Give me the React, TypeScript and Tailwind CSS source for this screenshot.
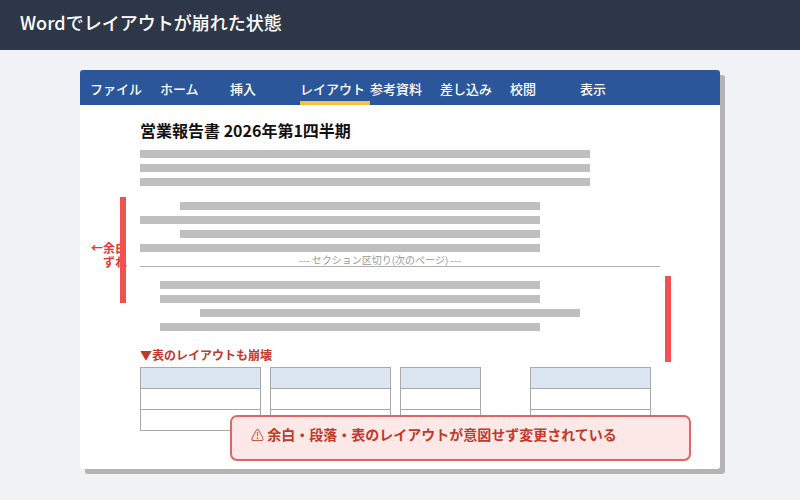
const tabs = ["ファイル", "ホーム", "挿入", "レイアウト", "参考資料", "差し込み", "校閲", "表示"];

const Line = ({ className }: { className: string }) => (
  <div className={`h-[8px] bg-[#bfbfbf] ${className}`}></div>
);

const Table = ({ width }: { width: string }) => (
  <div className={`flex flex-col border border-[#a9a9a9] ${width}`}>
    <div className="h-[21px] bg-[#dce6f2] border-b border-[#a9a9a9]"></div>
    <div className="h-[21px] bg-white border-b border-[#a9a9a9]"></div>
    <div className="h-[20px] bg-white"></div>
  </div>
);

export default function App() {
  return (
    <div
      className="w-[800px] h-[500px] bg-[#f0f2f5] flex flex-col"
      style={{ fontFamily: '"Noto Sans CJK JP", "Noto Sans", sans-serif' }}
    >
      <div className="h-[50px] bg-[#2d3748] px-5 pt-[10px]">
        <h1 className="text-[18px] leading-[24px] font-medium text-white">Wordでレイアウトが崩れた状態</h1>
      </div>

      <div className="pl-[80px] pt-[20px]">
        <div className="relative w-[640px] h-[399px] bg-white rounded-[3px] shadow-[5px_5px_0_#b4b4b4] flex flex-col">
          {/* ribbon */}
          <div className="h-[35px] bg-[#2b579a] rounded-t-[3px] flex pl-[10px]">
            {tabs.map((t) => (
              <div key={t} className="w-[70px] h-full flex flex-col">
                <div className="flex-1 pt-[10px] text-[13px] leading-[18px] font-medium text-white whitespace-nowrap">{t}</div>
                <div className={`h-[4px] ${t === "レイアウト" ? "bg-[#f4c142]" : ""}`}></div>
              </div>
            ))}
          </div>

          {/* page */}
          <div className="pl-[60px] pt-[14px] flex flex-col">
            <h2 className="text-[16px] leading-[22px] font-bold text-[#111]">営業報告書 2026年第1四半期</h2>

            <div className="mt-[9px] flex flex-col gap-[6px]">
              <Line className="w-[450px]" />
              <Line className="w-[450px]" />
              <Line className="w-[450px]" />
            </div>

            <div className="mt-[16px] flex flex-col gap-[6px]">
              <Line className="ml-[40px] w-[360px]" />
              <Line className="w-[400px]" />
              <Line className="ml-[40px] w-[360px]" />
              <Line className="w-[400px]" />
            </div>

            <div className="w-[520px] border-b border-[#b0b0b0] mt-[1px]">
              <div className="w-[480px] text-center text-[10px] leading-[13px] text-[#9a9a9a]">
                --- セクション区切り(次のページ) ---
              </div>
            </div>

            <div className="mt-[14px] flex flex-col gap-[6px]">
              <Line className="ml-[20px] w-[380px]" />
              <Line className="ml-[20px] w-[380px]" />
              <Line className="ml-[60px] w-[380px]" />
              <Line className="ml-[20px] w-[380px]" />
            </div>

            <div className="mt-[16px] text-[12px] leading-[16px] font-bold text-[#c0392b]">▼表のレイアウトも崩壊</div>

            <div className="mt-[4px] flex">
              <Table width="w-[121px]" />
              <div className="w-[9px]"></div>
              <Table width="w-[121px]" />
              <div className="w-[9px]"></div>
              <Table width="w-[81px]" />
              <div className="w-[49px]"></div>
              <Table width="w-[121px]" />
            </div>
          </div>

          {/* annotations */}
          <div className="absolute left-0 top-[171px] w-[47px] text-right text-[12px] leading-[14px] font-bold text-[#e53935]">
            <div>←余白</div>
            <div>ずれ</div>
          </div>
          <div className="absolute left-[40px] top-[127px] w-[6px] h-[106px] bg-[#f05252]"></div>
          <div className="absolute left-[585px] top-[206px] w-[6px] h-[86px] bg-[#f05252]"></div>

          <div className="absolute left-[150px] top-[345px] w-[461px] h-[46px] rounded-[7px] border-2 border-[#e06666] bg-[#fde8e8] pl-[19px] pt-[7px]">
            <div className="text-[14px] leading-[20px] font-bold text-[#c0392b]">
              <span className="font-normal text-[13px]">⚠</span> 余白・段落・表のレイアウトが意図せず変更されている
            </div>
          </div>
        </div>
      </div>
    </div>
  );
}
